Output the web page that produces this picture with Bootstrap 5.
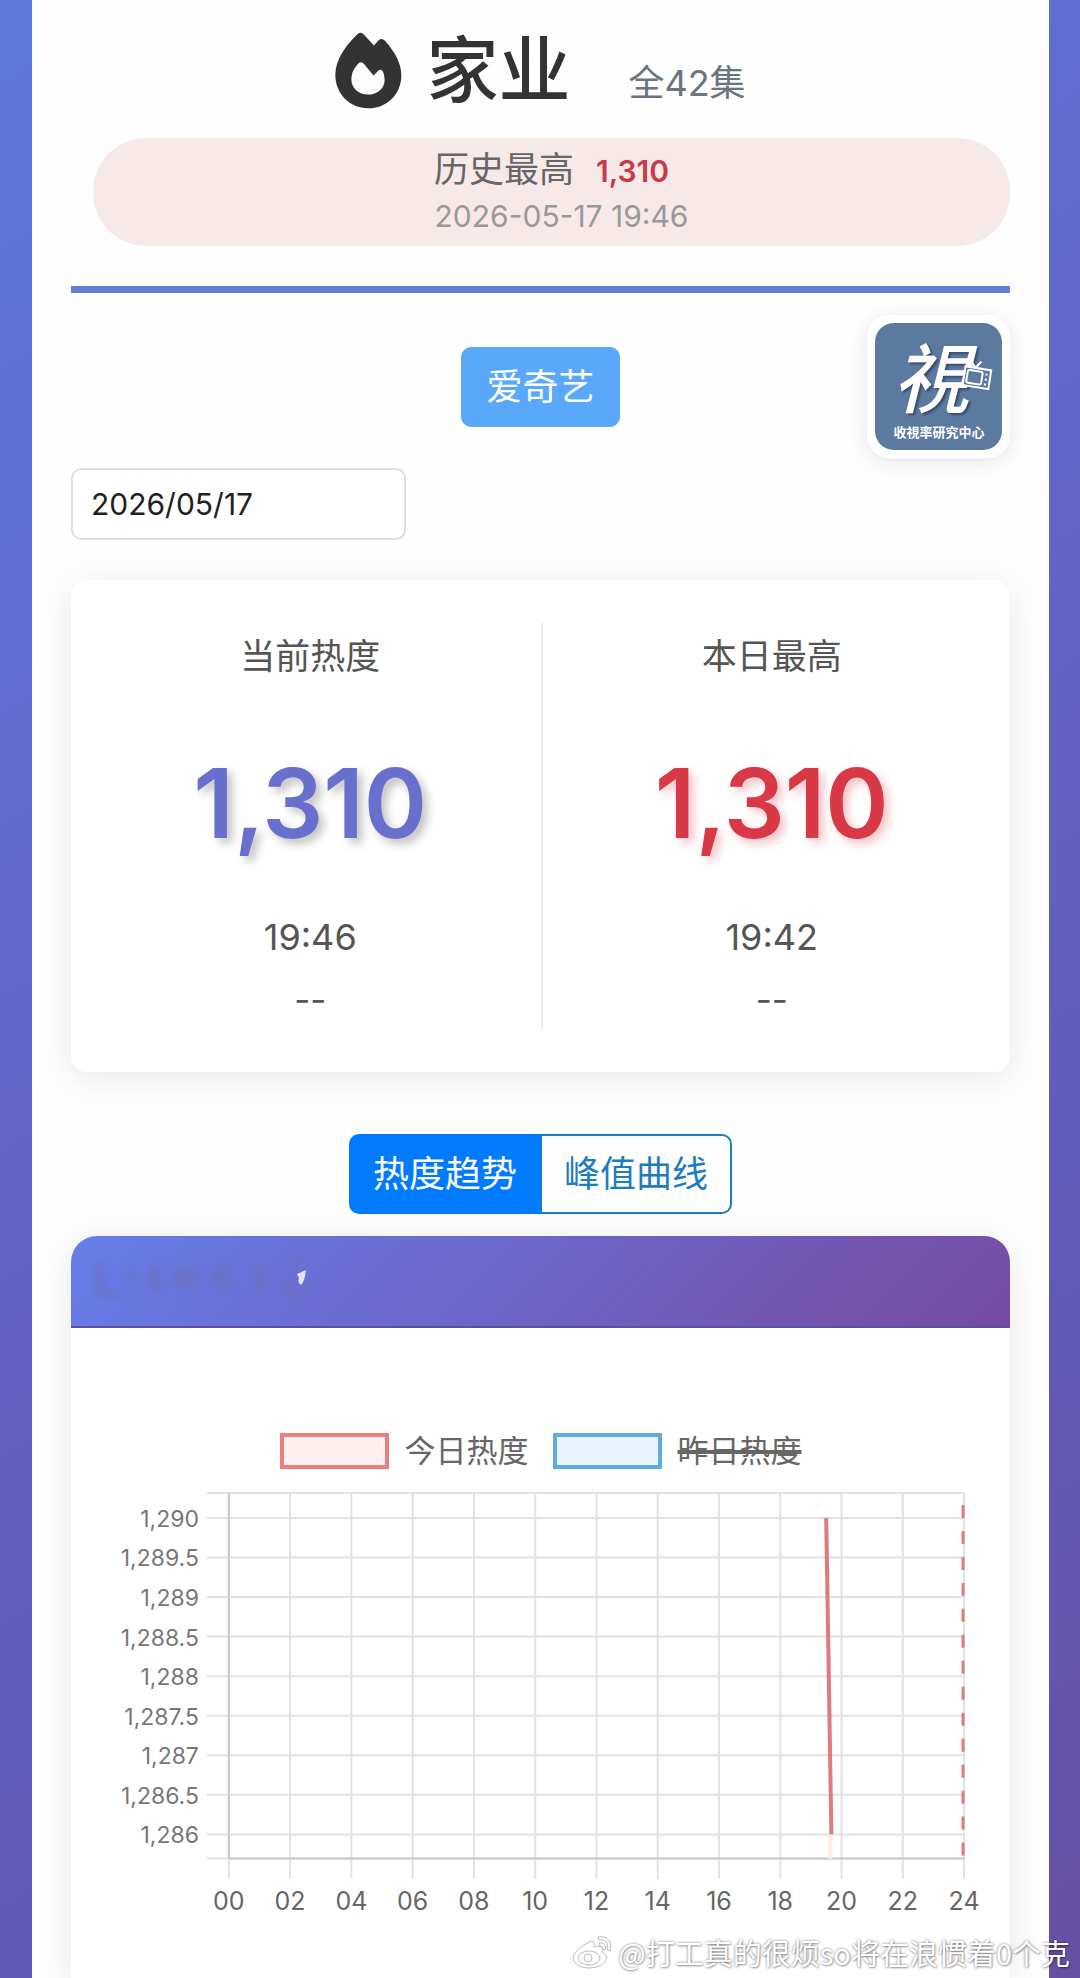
<!DOCTYPE html>
<html lang="zh-CN">
<head>
    <meta charset="UTF-8">
    <meta name="viewport" content="width=device-width, initial-scale=1.0">
    <title>家业 - 热度趋势</title>
    <link href="https://cdn.jsdelivr.net/npm/bootstrap@5.3.0/dist/css/bootstrap.min.css" rel="stylesheet">
    <style>
        body {
            font-family: Inter, "Noto Sans CJK SC", sans-serif;
            background: linear-gradient(150deg, #6078de 0%, #6259b6 75%, #6650a6 100%);
            color: #333;
            overflow-x: hidden;
        }
        .page-wrap {
            padding: 0 31px 0 32px;
        }
        .panel {
            background: #fefefe;
            padding: 28px 39px 0;
        }
        .flame {
            width: 67px;
            height: 77px;
        }
        .title-row {
            gap: 24px;
            height: 84px;
        }
        .drama-name {
            font-size: 72px;
            line-height: 84px;
            font-weight: 500;
        }
        .episodes {
            font-size: 36px;
            color: #6c757d;
            margin-left: 58px;
        }
        .record {
            background: #f8e9e9;
            border-radius: 53px;
            margin: 26px 0 40px 22px;
            padding: 8px;
            font-size: 35px;
            line-height: 46px;
            color: #666;
        }
        .record strong {
            font-size: 30px;
            font-weight: 600;
            color: #c93a48;
            margin-left: 22px;
        }
        .record-time {
            font-size: 30px;
            line-height: 44px;
            color: #999;
            margin-left: 20px;
        }
        .rule {
            height: 7px;
            background: #667fd6;
        }
        .platform-row {
            display: grid;
            grid-template-columns: 1fr auto 1fr;
            align-items: center;
            padding: 22px 0 10px;
        }
        .btn-platform {
            --bs-btn-bg: #5aa8fb;
            --bs-btn-border-color: #5aa8fb;
            --bs-btn-color: #fff;
            font-size: 36px;
            line-height: 54px;
            padding: 12px 24px;
            border-radius: 10px;
        }
        .logo {
            width: 143px;
            padding: 8px;
            border-radius: 22px;
            box-shadow: 0 4px 20px rgba(0, 0, 0, .1);
        }
        .logo-char {
            filter: drop-shadow(2px 2px 1px rgba(30, 45, 75, .6));
        }
        .date-box {
            width: 335px;
            height: 72px;
            font-size: 30px;
            padding: 0 18px;
            border: 2px solid #dedede;
            border-radius: 10px;
            color: #212121;
        }
        .heat-card {
            margin-top: 40px;
            padding: 43px 9px;
            border-radius: 16px;
            box-shadow: 0 6px 34px rgba(0, 0, 0, .09);
        }
        .heat-col {
            height: 406px;
            color: #555;
        }
        .heat-col + .heat-col {
            border-left: 2px solid #ececec;
        }
        .heat-label {
            font-size: 35px;
            line-height: 66px;
        }
        .heat-num {
            font-size: 96px;
            line-height: 120px;
            font-weight: 600;
            margin: 54px 0 50px;
            color: #686fcd;
            text-shadow: 5px 5px 10px rgba(0, 0, 0, .25);
        }
        .heat-num.peak {
            color: #d93847;
            text-shadow: 5px 5px 10px rgba(220, 53, 69, .3);
        }
        .heat-time {
            font-size: 36px;
            line-height: 48px;
            margin-bottom: 18px;
        }
        .heat-diff {
            font-size: 35px;
            line-height: 40px;
        }
        .chart-tabs {
            margin: 62px 0 22px;
        }
        .chart-tabs .btn {
            --bs-btn-color: #1d7cc0;
            --bs-btn-border-color: #1d7cc0;
            --bs-btn-active-bg: #007bff;
            --bs-btn-active-border-color: #007bff;
            --bs-btn-active-color: #fff;
            --bs-btn-border-width: 2px;
            width: 192px;
            font-size: 36px;
            line-height: 54px;
            padding: 11px 0;
            border-radius: 10px;
        }
        .chart-card {
            border-radius: 26px 26px 0 0;
            box-shadow: 0 6px 34px rgba(0, 0, 0, .09);
        }
        .chart-head {
            height: 92px;
            border-radius: 26px 26px 0 0;
            border-bottom: 2px solid #5a50a0;
            background: linear-gradient(135deg, #667eea 0%, #764ba2 100%);
            padding: 18px 20px;
        }
        .chart-legend {
            padding-top: 105px;
            gap: 24px;
            font-size: 31px;
            line-height: 36px;
            color: #666;
        }
        .swatch {
            width: 109px;
            height: 36px;
            border: 4px solid #e8807e;
            background: #fff0ef;
        }
        .swatch.yesterday {
            border-color: #5eabe0;
            background: #e9f5fe;
        }
        .struck {
            text-decoration: line-through;
            text-decoration-thickness: 4px;
        }
        .weibo-mark {
            position: absolute;
            right: 10px;
            bottom: 4px;
            gap: 4px;
            font-family: "Noto Sans CJK SC", sans-serif;
            font-size: 29px;
            line-height: 44px;
            color: #fff;
            text-shadow: 0 0 3px rgba(0, 0, 0, .5), 1px 1px 2px rgba(0, 0, 0, .25);
        }
    </style>
</head>
<body>
    <div class="page-wrap min-vh-100 position-relative d-flex flex-column">
        <main class="panel flex-grow-1 d-flex flex-column">
            <!-- Title -->
            <header>
                <div class="title-row d-flex justify-content-center align-items-center">
                    <svg class="flame" viewBox="44 40 200 228" aria-hidden="true">
                        <path fill="#333" fill-rule="evenodd" d="M109 47Q120 36 131 47L160 79L175 63Q184 55 194 66C222 98 242 132 242 168C242 225 198 267 143 267C88 267 45 224 45 167C45 122 76 80 109 47ZM114 133Q122 125 130 134L159 169L174 154Q182 148 187 157C190 164 192 173 192 183C192 208 170 226 143 226C114 226 93 207 93 181C93 162 101 146 114 133Z"/>
                    </svg>
                    <div class="d-flex align-items-baseline">
                        <h1 class="drama-name m-0">家业</h1>
                        <span class="episodes">全42集</span>
                    </div>
                </div>
                <div class="record text-center">
                    <div>历史最高<strong>1,310</strong></div>
                    <div class="record-time">2026-05-17 19:46</div>
                </div>
                <div class="rule"></div>
            </header>

            <!-- Platform and date -->
            <div class="platform-row">
                <span></span>
                <button type="button" class="btn btn-platform">爱奇艺</button>
                <div class="logo bg-white ms-auto">
                    <svg class="d-block w-100" viewBox="0 0 127 127" role="img" aria-label="收视率研究中心">
                        <rect width="127" height="127" rx="19" fill="#5c7aa0"/>
                        <g font-family="Noto Sans CJK TC, sans-serif" text-anchor="middle" fill="#fff">
                            <text class="logo-char" x="56" y="84" font-size="76" font-weight="500" font-style="italic">視</text>
                            <text x="64" y="114" font-size="13" font-weight="700">收視率研究中心</text>
                        </g>
                        <g transform="rotate(9 101 54)" fill="#5c7aa0" stroke="#fff" stroke-width="2">
                            <path d="M99 45l5 -7M99 45l-6 -7" fill="none"/>
                            <rect x="89" y="45" width="26" height="19"/>
                            <rect x="92" y="48" width="15" height="13" rx="2"/>
                            <path d="M111 49v2M111 54v2M111 59v2"/>
                        </g>
                    </svg>
                </div>
            </div>
            <input type="text" class="form-control date-box" value="2026/05/17" aria-label="日期">

            <!-- Current and peak heat -->
            <section class="heat-card bg-white">
                <div class="row g-0 text-center">
                    <div class="col-6 heat-col">
                        <div class="heat-label">当前热度</div>
                        <div class="heat-num">1,310</div>
                        <div class="heat-time">19:46</div>
                        <div class="heat-diff">--</div>
                    </div>
                    <div class="col-6 heat-col">
                        <div class="heat-label">本日最高</div>
                        <div class="heat-num peak">1,310</div>
                        <div class="heat-time">19:42</div>
                        <div class="heat-diff">--</div>
                    </div>
                </div>
            </section>

            <!-- Trend chart -->
            <div class="text-center">
                <div class="btn-group chart-tabs" role="group">
                    <button type="button" class="btn active">热度趋势</button>
                    <button type="button" class="btn">峰值曲线</button>
                </div>
            </div>
            <section class="chart-card bg-white flex-grow-1">
                <div class="chart-head">
                    <svg class="d-block" width="230" height="54" aria-hidden="true">
                        <defs><filter id="soft"><feGaussianBlur stdDeviation="4"/></filter></defs>
                        <g filter="url(#soft)" fill="none" stroke="#6d70b4" stroke-width="8" opacity=".6">
                            <path d="M9 8v30q8 6 20 2M34 22h12M58 14l10 4M62 12v24M56 26l18 8M88 12v22M84 22l22 4M102 12l-6 24M122 14l8 20M140 12l-10 14l12 8M162 16l14 4M170 12v26M198 24q-6 8 2 14q12 4 16-8M207 4v12"/>
                        </g>
                        <path d="M206 20L215 16Q214 27 210 31Q206 28 208 24Z" fill="#e6e2f5"/>
                    </svg>
                </div>
                <div class="chart-legend d-flex justify-content-center">
                    <div class="d-flex gap-3"><span class="swatch"></span><span>今日热度</span></div>
                    <div class="d-flex gap-3"><span class="swatch yesterday"></span><span class="struck">昨日热度</span></div>
                </div>
                <svg id="heatChart" class="d-block w-100" viewBox="0 0 940 460" role="img" aria-label="今日热度"></svg>
            </section>
        </main>

        <div class="weibo-mark d-flex align-items-center text-nowrap">
            <svg width="42" height="34" viewBox="0 0 42 34" fill="#fff" stroke="#bbb" aria-hidden="true">
                <path d="M14 9C20 4 24 6 22 12C29 10 32 13 30 17C39 21 34 32 18 33C4 33 -2 25 3 18C6 14 10 11 14 9Z"/>
                <ellipse cx="17" cy="23" rx="11" ry="7"/>
                <circle cx="16" cy="23" r="4"/>
                <path d="M26 2C35 0 41 7 38 16L35 15C37 8 33 4 27 5ZM27 8C32 7 35 11 33 15L30 14C31 12 30 10 27 11Z"/>
            </svg>
            <span>@打工真的很烦so将在浪惯着0个克</span>
        </div>
    </div>

    <script src="https://cdn.jsdelivr.net/npm/bootstrap@5.3.0/dist/js/bootstrap.bundle.min.js"></script>
    <script>
        // Plot area inside the 940x460 viewBox
        const area = { left: 158, right: 894, top: 24, bottom: 390 };
        const yMax = 1290, yStep = 0.5, yFirst = 49, yGap = 39.6;
        const parts = [];

        function line(x1, y1, x2, y2, color = '#e2e2e2', width = 2, extra = '') {
            parts.push(`<line x1="${x1}" y1="${y1}" x2="${x2}" y2="${y2}" stroke="${color}" stroke-width="${width}" ${extra}/>`);
        }

        function label(x, y, size, anchor, color, text) {
            parts.push(`<text x="${x}" y="${y}" font-size="${size}" text-anchor="${anchor}" fill="${color}">${text}</text>`);
        }

        const xOf = hour => area.left + (area.right - area.left) * hour / 24;
        const yOf = value => yFirst + (yMax - value) / yStep * yGap;

        // Horizontal grid and value labels
        line(area.left - 22, area.top, area.right, area.top);
        for (let v = 1290; v >= 1286; v -= yStep) {
            line(area.left - 22, yOf(v), area.right, yOf(v));
            label(128, yOf(v) + 9, 23, 'end', '#777', v.toLocaleString('en-US'));
        }
        line(area.left - 22, area.bottom, area.right, area.bottom);

        // Vertical grid and hour labels
        for (let h = 0; h <= 24; h += 2) {
            line(xOf(h), area.top, xOf(h), area.bottom + 20);
            label(xOf(h), 441, 25, 'middle', '#666', String(h).padStart(2, '0'));
        }
        line(area.left, area.top, area.left, area.bottom, '#c8c8c8');
        line(area.left, area.bottom, area.right, area.bottom, '#c8c8c8');

        // Today's heat, then the end-of-day marker
        line(xOf(19.62), yOf(1286), xOf(19.62), area.bottom, '#fff1e6', 5);
        line(xOf(19.5), yOf(1290), xOf(19.67), yOf(1286), '#e07b7d', 4);
        line(area.right - 1, 36, area.right - 1, area.bottom, '#e07b7d', 3, 'stroke-dasharray="13 13"');

        document.getElementById('heatChart').innerHTML = parts.join('');
    </script>
</body>
</html>
